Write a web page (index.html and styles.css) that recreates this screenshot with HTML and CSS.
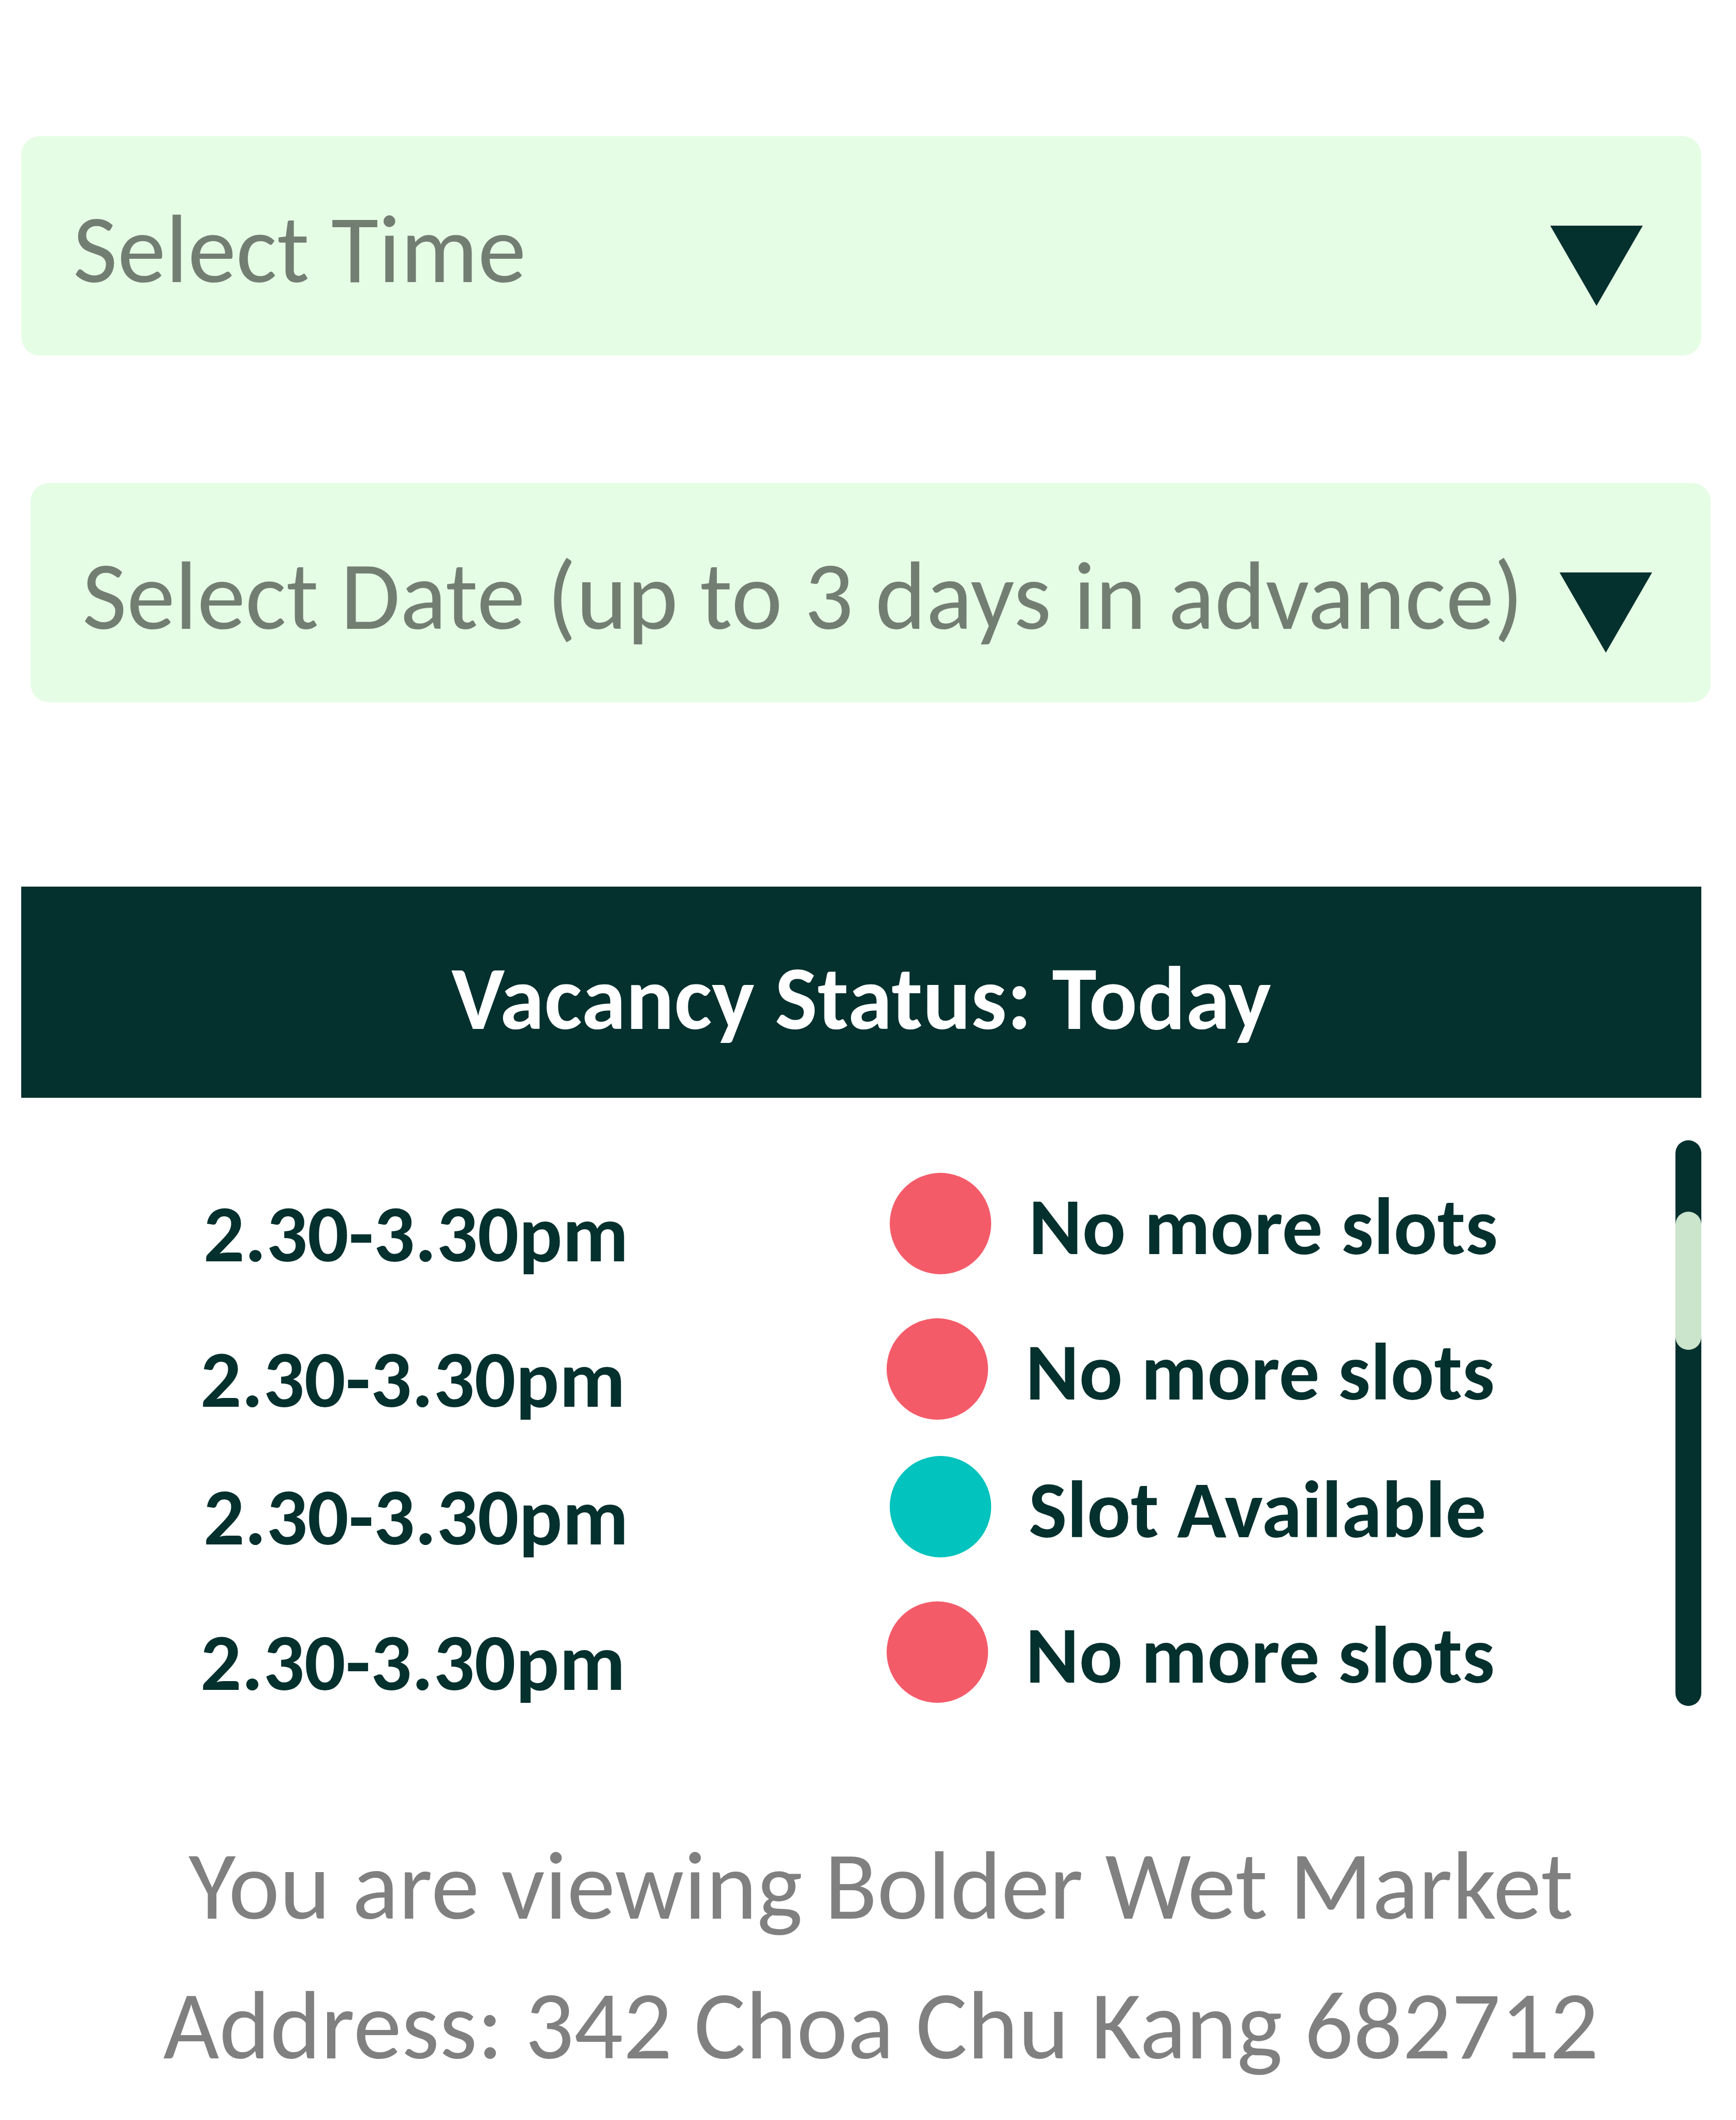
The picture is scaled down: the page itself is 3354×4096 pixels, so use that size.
FILE: index.html
```html
<!DOCTYPE html>
<html lang="en">
<head>
<meta charset="utf-8">
<meta name="viewport" content="width=device-width, initial-scale=1">
<title>Bolder Wet Market</title>
<link rel="stylesheet" href="styles.css">
</head>
<body>
<main class="page">
  <form class="filters">
    <div class="field">
      <select class="field-select" aria-label="Select Time">
        <option>Select Time</option>
      </select>
      <svg class="field-arrow" viewBox="0 0 180 156" aria-hidden="true"><path d="M0 0H180L90 156Z"/></svg>
    </div>
    <div class="field field-date">
      <select class="field-select" aria-label="Select Date">
        <option>Select Date (up to 3 days in advance)</option>
      </select>
      <svg class="field-arrow" viewBox="0 0 180 156" aria-hidden="true"><path d="M0 0H180L90 156Z"/></svg>
    </div>
  </form>

  <section class="vacancy">
    <h1 class="vacancy-title">Vacancy Status: Today</h1>
    <div class="vacancy-body">
      <table class="slots">
        <tbody>
          <tr class="slot"><td class="slot-time">2.30-3.30pm</td><td class="slot-status"><span class="status"><span class="dot dot-full"></span>No more slots</span></td></tr>
          <tr class="slot"><td class="slot-time">2.30-3.30pm</td><td class="slot-status"><span class="status"><span class="dot dot-full"></span>No more slots</span></td></tr>
          <tr class="slot"><td class="slot-time">2.30-3.30pm</td><td class="slot-status"><span class="status"><span class="dot dot-free"></span>Slot Available</span></td></tr>
          <tr class="slot"><td class="slot-time">2.30-3.30pm</td><td class="slot-status"><span class="status"><span class="dot dot-full"></span>No more slots</span></td></tr>
        </tbody>
      </table>
      <div class="scroll-track"><div class="scroll-thumb"></div></div>
    </div>
  </section>

  <footer class="market">
    <p class="market-line">You are viewing Bolder Wet Market</p>
    <p class="market-line">Address: 342 Choa Chu Kang 682712</p>
  </footer>
</main>
</body>
</html>
```
FILE: styles.css
```css
:root {
  --dark: #04302e;
  --mint: #e6fde5;
  --sage: #cbe4cc;
  --red: #f45b69;
  --teal: #02c3bd;
}

* {
  box-sizing: border-box;
}

body {
  margin: 0;
  background: #fff;
  color: var(--dark);
  font-family: Carlito, Lato, sans-serif;
}

.page {
  padding: 263px 67px 0 41px;
}

.filters {
  display: flex;
  flex-direction: column;
  gap: 246px;
}

.field {
  position: relative;
}

.field-date {
  margin: 0 -18px 0 18px;
}

.field-select {
  display: block;
  width: 100%;
  height: 424px;
  margin: 0;
  padding: 12px 300px 0 100px;
  border: 0;
  border-radius: 36px;
  background: var(--mint);
  color: #737e73;
  font: 400 187px/240px Carlito, Lato, sans-serif;
  appearance: none;
}

.field-arrow {
  position: absolute;
  top: 173px;
  right: 113px;
  width: 179px;
  height: 155px;
  fill: var(--dark);
  pointer-events: none;
}

.vacancy {
  margin-top: 356px;
}

.vacancy-title {
  margin: 0;
  padding: 106px 0 82px;
  background: var(--dark);
  color: #fff;
  font-size: 174px;
  font-weight: 700;
  line-height: 220px;
  text-align: center;
}

.vacancy-body {
  display: flex;
  gap: 20px;
  padding-top: 82px;
}

.slots {
  flex: 1;
  margin-top: 63px;
  border-collapse: collapse;
  table-layout: fixed;
  font-size: 157px;
  font-weight: 700;
  line-height: 208px;
}

.slot {
  height: 281px;
}

.slot:nth-child(even) {
  height: 266px;
}

.slot-time,
.slot-status {
  padding: 0;
  vertical-align: top;
}

.slot-time {
  width: 53%;
  padding: 14px 0 0 352px;
}

.slot:nth-child(even) .slot-time {
  padding-left: 346px;
}

.status {
  display: flex;
  gap: 72px;
  margin-left: -5px;
}

.slot:nth-child(even) .status {
  margin-left: -11px;
}

.dot {
  width: 196px;
  height: 196px;
  border-radius: 50%;
}

.dot-full {
  background: var(--red);
}

.dot-free {
  background: var(--teal);
}

.scroll-track {
  width: 50px;
  height: 1093px;
  padding-top: 138px;
  border-radius: 25px;
  background: var(--dark);
}

.scroll-thumb {
  height: 267px;
  border-radius: 25px;
  background: var(--sage);
}

.market {
  margin: 148px 0 0 76px;
  color: #808080;
  text-align: center;
}

.market-line {
  margin: 0;
  font-size: 187px;
  line-height: 270px;
}
```
